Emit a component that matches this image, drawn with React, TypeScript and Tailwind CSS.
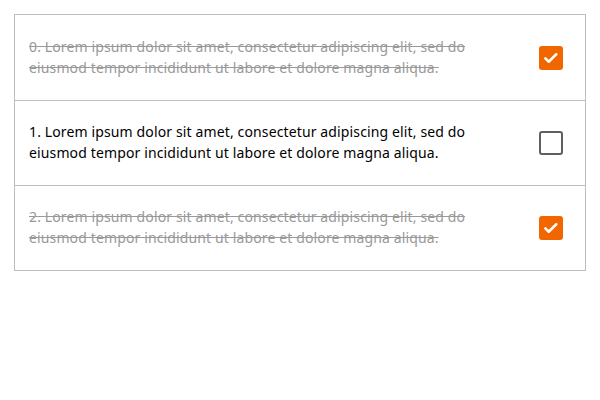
import { useState } from "react";

const TEXT =
  "Lorem ipsum dolor sit amet, consectetur adipiscing elit, sed do eiusmod tempor incididunt ut labore et dolore magna aliqua.";

function CheckBox({ checked }: { checked: boolean }) {
  if (checked) {
    return (
      <span className="flex h-6 w-6 items-center justify-center rounded-[3px] bg-[#f26600]">
        <svg viewBox="0 0 24 24" className="h-[18px] w-[18px]" fill="none" stroke="white" strokeWidth={3.4} strokeLinecap="round" strokeLinejoin="round">
          <path d="M4.5 12.5l4.5 4.5 10-10" />
        </svg>
      </span>
    );
  }
  return <span className="block h-6 w-6 rounded-[3px] border-2 border-[#5f5f5f] bg-white" />;
}

export default function App() {
  const [done, setDone] = useState([true, false, true]);

  return (
    <div className="bg-white p-[14px] font-['Noto_Sans',sans-serif]">
      <ul className="border border-[#bdbdbd]">
        {done.map((isDone, i) => (
          <li
            key={i}
            className="flex h-[85px] items-center justify-between border-t border-[#bdbdbd] pl-[14px] pr-[22px] first:border-t-0"
          >
            <p
              className={
                "-mt-[2px] w-[460px] text-[14px] leading-[21px] tracking-[0.13px] " +
                (isDone ? "text-[#999] line-through" : "text-black")
              }
            >
              {i}. {TEXT}
            </p>
            <button
              type="button"
              onClick={() => setDone(done.map((d, j) => (j === i ? !d : d)))}
            >
              <CheckBox checked={isDone} />
            </button>
          </li>
        ))}
      </ul>
    </div>
  );
}
